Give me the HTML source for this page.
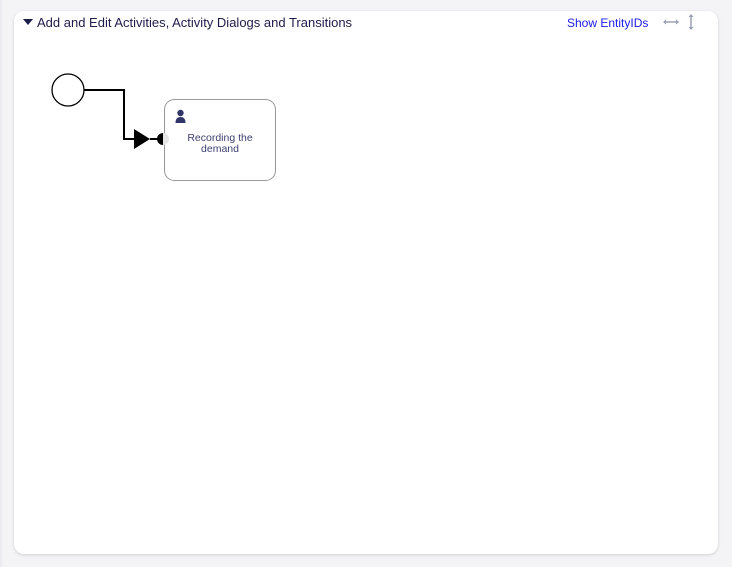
<!DOCTYPE html>
<html><head><style>
html,body{margin:0;padding:0;width:732px;height:567px;background:#f4f4f7;overflow:hidden;font-family:"Liberation Sans",sans-serif;}
.card{position:absolute;left:14px;top:11px;width:704px;height:543px;background:#fff;border-radius:10px;box-shadow:0 1px 3px rgba(0,0,0,0.15);}
.title{position:absolute;left:23px;top:15px;font-size:13px;color:#1d1d4a;}
.tri{display:inline-block;width:0;height:0;border-left:5px solid transparent;border-right:5px solid transparent;border-top:6px solid #1d1d4a;margin-right:4px;vertical-align:2px;}
.show{position:absolute;left:567px;top:16px;font-size:12px;color:#1a1af0;}
</style></head><body>
<div style="position:absolute;left:0;top:0;width:2px;height:567px;background:#ececf0"></div>
<div class="card"></div>
<div class="title"><span class="tri"></span>Add and Edit Activities, Activity Dialogs and Transitions</div>
<div class="show">Show EntityIDs</div>
<svg width="732" height="567" style="position:absolute;left:0;top:0">
<g stroke="#9aa0b4" stroke-width="1.5" fill="#9aa0b4">
<line x1="665" y1="22" x2="677" y2="22"/><path d="M663 22l3-2.5v5z M679 22l-3-2.5v5z" stroke="none"/>
<line x1="691" y1="16" x2="691" y2="28"/><path d="M691 14l-2.5 3h5z M691 30l-2.5-3h5z" stroke="none"/>
</g>
<circle cx="68" cy="90" r="16" fill="#fff" stroke="#000" stroke-width="1.3"/>
<polyline points="84,90 124,90 124,139 135,139" fill="none" stroke="#000" stroke-width="2"/>
<path d="M134 129 L150 139 L134 149 Z" fill="#000"/>
<line x1="150" y1="139" x2="160" y2="139" stroke="#000" stroke-width="2"/>
<rect x="164.5" y="99.5" width="111" height="81" rx="10" fill="#fff" stroke="#999" stroke-width="1"/>
<path d="M163 133 A6 6 0 0 0 163 145 Z" fill="#000"/>
<path d="M163 133 A6 6 0 0 1 163 145 Z" fill="#e6e6e6"/>
<circle cx="180.5" cy="113" r="3.2" fill="#2f3566"/>
<path d="M175.5 123 Q175.5 117 180.5 117 Q185.5 117 185.5 123 Z" fill="#2f3566"/>
<text x="220" y="141" font-size="10.5" fill="#3d4170" text-anchor="middle" font-family="Liberation Sans">Recording the</text>
<text x="220" y="152" font-size="10.5" fill="#3d4170" text-anchor="middle" font-family="Liberation Sans">demand</text>
</svg>
</body></html>
